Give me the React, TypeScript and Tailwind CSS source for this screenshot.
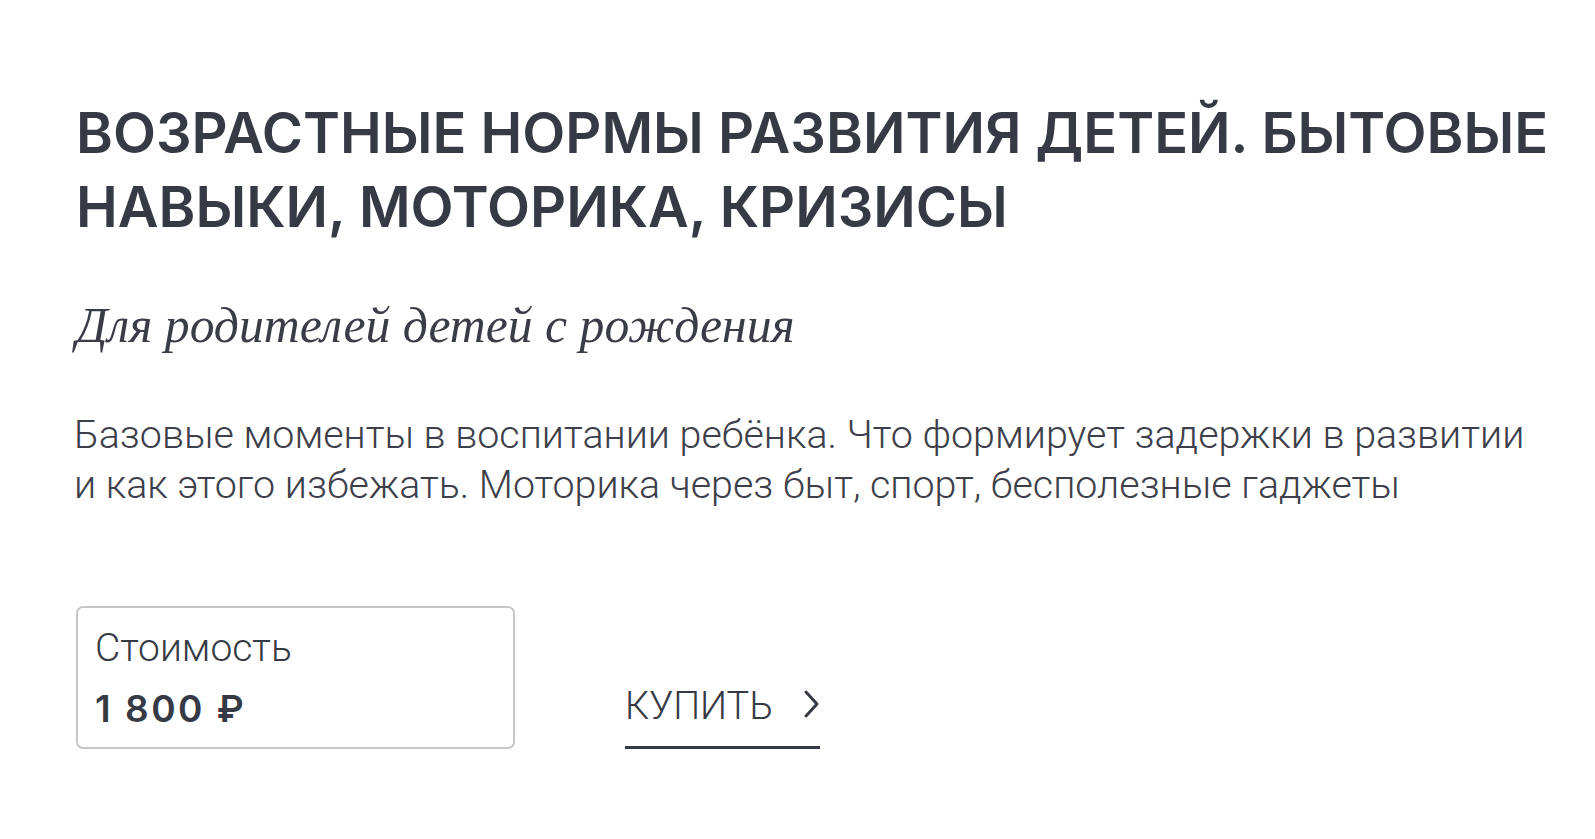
import React from "react";

export default function App() {
  return (
    <div className="min-h-screen w-full bg-white text-[#363a45]">
      <div className="pl-[76px] pr-[40px] pt-[96px]">
        <h1 className="font-['Inter',sans-serif] font-semibold text-[56px] leading-[74px] uppercase">
          Возрастные нормы развития детей. Бытовые
          <br />
          навыки, моторика, кризисы
        </h1>
        <div className="mt-[52px] font-['Liberation_Serif',serif] italic text-[49.7px] leading-[60px] text-[#3a3d47]">
          Для родителей детей с рождения
        </div>
        <p className="mt-[54px] -ml-[2px] font-['Roboto',sans-serif] font-light text-[39.4px] leading-[50px] text-[#3d404a]">
          Базовые моменты в воспитании ребёнка. Что формирует задержки в развитии
          <br />
          и как этого избежать. Моторика через быт, спорт, бесполезные гаджеты
        </p>
        <div className="mt-[96px] flex items-end gap-[110px]">
          <div className="w-[439px] h-[143px] rounded-[7px] border-2 border-[#c6c7c9] px-[17px] pt-[20px]">
            <div className="font-['Roboto',sans-serif] font-light text-[39px] leading-[40px]">Стоимость</div>
            <div className="mt-[21px] font-['Inter',sans-serif] font-semibold text-[37px] leading-[40px] tracking-[2.5px]">1 800 ₽</div>
          </div>
          <div className="flex flex-col">
            <div className="flex items-center gap-[30px] font-['Roboto',sans-serif] font-light text-[38px] leading-[40px]">
              <span>КУПИТЬ</span>
              <svg width="18" height="30" viewBox="0 0 18 30" fill="none" className="mb-[4px]">
                <path d="M3 3 L14 15 L3 27" stroke="#363a45" strokeWidth="3" strokeLinecap="round" strokeLinejoin="round" />
              </svg>
            </div>
            <div className="mt-[20px] h-[3px] w-[195px] bg-[#363a45]" />
          </div>
        </div>
      </div>
    </div>
  );
}
